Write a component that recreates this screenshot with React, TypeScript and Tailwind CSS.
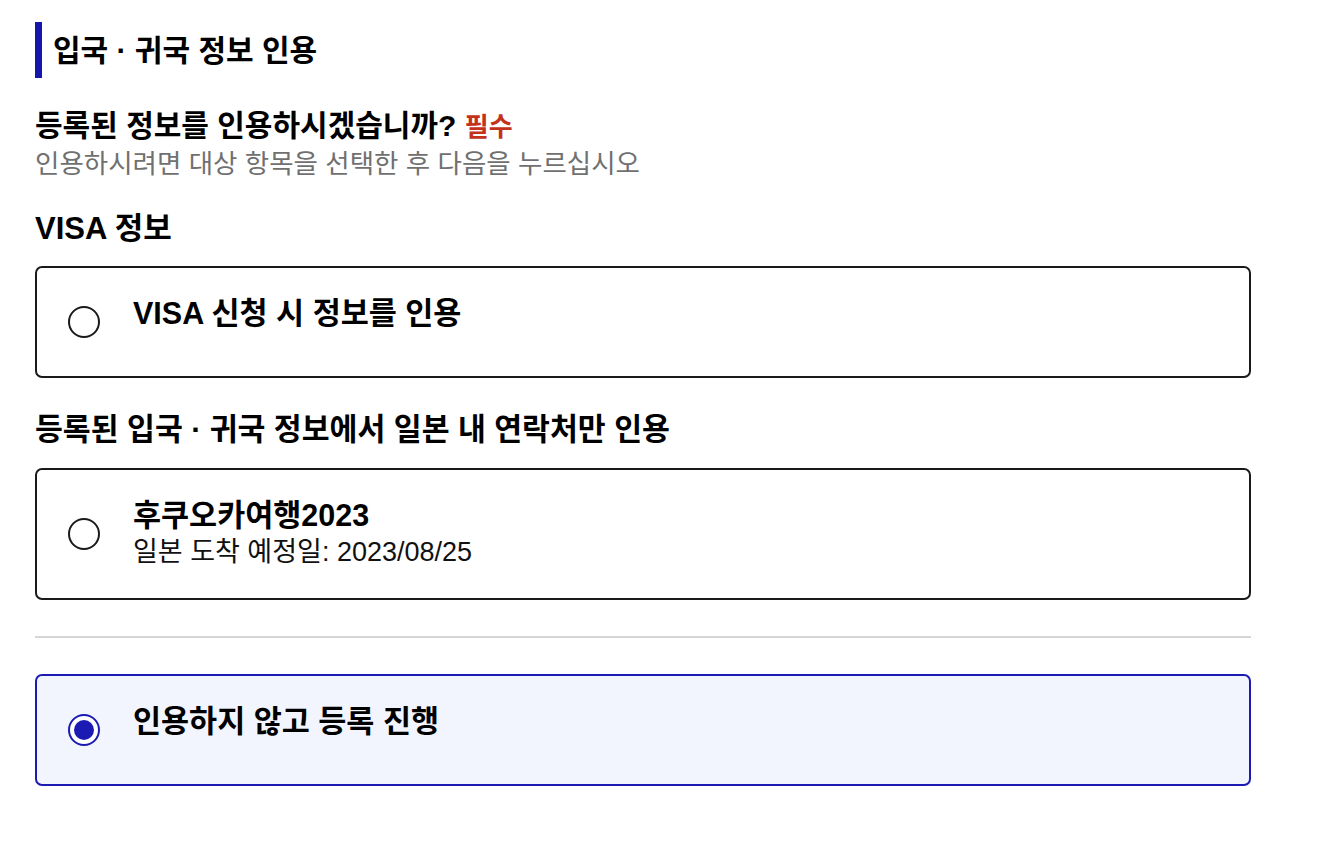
import React from "react";

const font = { fontFamily: '"Liberation Sans", "Noto Sans CJK KR", sans-serif' };

function Radio({ checked }: { checked?: boolean }) {
  if (checked) {
    return (
      <span className="flex h-[32px] w-[32px] shrink-0 items-center justify-center rounded-full border-2 border-[#1b1bb3] bg-white">
        <span className="h-[20px] w-[20px] rounded-full bg-[#1b1bb3]" />
      </span>
    );
  }
  return <span className="block h-[32px] w-[32px] shrink-0 rounded-full border-2 border-[#1a1a1a] bg-white" />;
}

type OptionCardProps = {
  title: string;
  detail?: string;
  checked?: boolean;
  height: string;
};

function OptionCard({ title, detail, checked, height }: OptionCardProps) {
  return (
    <label
      className={`flex ${height} items-center rounded-[7px] border-2 pl-[31px] ${
        checked ? "border-[#1b1bb3] bg-[#f2f5fe]" : "border-[#1a1a1a] bg-white"
      }`}
    >
      <Radio checked={checked} />
      <div className="ml-[33px] self-start pt-[25px]">
        <div className="text-[30.5px] font-bold leading-[40px] text-black">{title}</div>
        {detail && <div className="text-[27px] leading-[34px] text-[#111]">{detail}</div>}
      </div>
    </label>
  );
}

export default function App() {
  return (
    <div className="min-h-[854px] bg-white pl-[35px] pr-[79px] pt-[22px]" style={font}>
      <div className="flex h-[56px] items-center border-l-[7px] border-[#1616ad] pl-[11px]">
        <h2 className="text-[30px] font-bold text-black">입국 · 귀국 정보 인용</h2>
      </div>

      <div className="mt-[28px]">
        <p className="text-[30px] font-bold leading-[40px] text-black">
          등록된 정보를 인용하시겠습니까? <span className="text-[26px] leading-none text-[#c4321c]">필수</span>
        </p>
        <p className="text-[26.5px] leading-[36px] text-[#707070]">인용하시려면 대상 항목을 선택한 후 다음을 누르십시오</p>
      </div>

      <h3 className="mt-[27px] text-[31px] font-bold leading-[40px] text-black">VISA 정보</h3>
      <div className="mt-[17px]">
        <OptionCard title="VISA 신청 시 정보를 인용" height="h-[112px]" />
      </div>

      <h3 className="mt-[32px] text-[30.3px] font-bold leading-[40px] text-black">
        등록된 입국 · 귀국 정보에서 일본 내 연락처만 인용
      </h3>
      <div className="mt-[18px]">
        <OptionCard title="후쿠오카여행2023" detail="일본 도착 예정일: 2023/08/25" height="h-[132px]" />
      </div>

      <div className="mt-[36px] h-[2px] bg-[#d6d6d6]" />

      <div className="mt-[36px]">
        <OptionCard title="인용하지 않고 등록 진행" checked height="h-[112px]" />
      </div>
    </div>
  );
}
